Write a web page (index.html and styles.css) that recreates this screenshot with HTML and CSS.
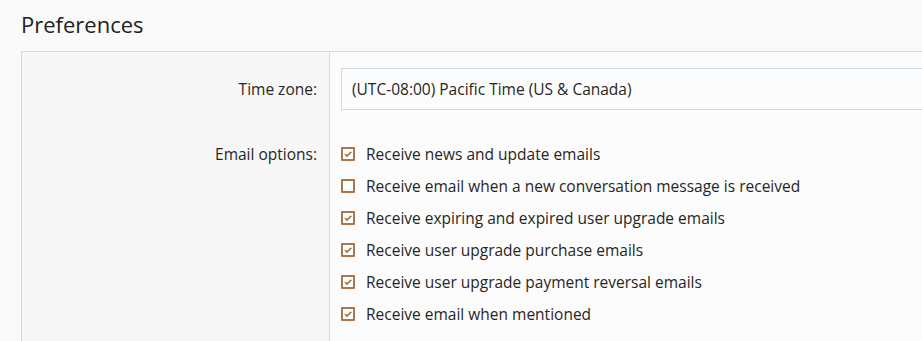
FILE: index.html
```html
<!DOCTYPE html>
<html lang="en">
<head>
    <meta charset="UTF-8">
    <title>Preferences</title>
    <link rel="stylesheet" href="styles.css">
</head>
<body>
    <h1 class="page-title">Preferences</h1>

    <div class="form-box">
        <div class="form-label form-label-input">Time zone:</div>
        <div class="form-field form-field-input">
            <div class="select-box">(UTC-08:00) Pacific Time (US &amp; Canada)</div>
        </div>

        <div class="form-label form-label-options">Email options:</div>
        <div class="form-field form-field-options">
            <label class="check-row">
                <span class="check-box"><svg viewBox="0 0 10 10"><path d="M2 5.1 L4.1 7.1 L8.2 2.9" /></svg></span>
                Receive news and update emails
            </label>
            <label class="check-row">
                <span class="check-box"></span>
                Receive email when a new conversation message is received
            </label>
            <label class="check-row">
                <span class="check-box"><svg viewBox="0 0 10 10"><path d="M2 5.1 L4.1 7.1 L8.2 2.9" /></svg></span>
                Receive expiring and expired user upgrade emails
            </label>
            <label class="check-row">
                <span class="check-box"><svg viewBox="0 0 10 10"><path d="M2 5.1 L4.1 7.1 L8.2 2.9" /></svg></span>
                Receive user upgrade purchase emails
            </label>
            <label class="check-row">
                <span class="check-box"><svg viewBox="0 0 10 10"><path d="M2 5.1 L4.1 7.1 L8.2 2.9" /></svg></span>
                Receive user upgrade payment reversal emails
            </label>
            <label class="check-row">
                <span class="check-box"><svg viewBox="0 0 10 10"><path d="M2 5.1 L4.1 7.1 L8.2 2.9" /></svg></span>
                Receive email when mentioned
            </label>
        </div>
    </div>
</body>
</html>
```

FILE: styles.css
```css
:root {
    --text-color: #262626;
    --border-color: #cddbe7;
    --check-color: #ab7748;
}

* {
    box-sizing: border-box;
    margin: 0;
    padding: 0;
}

body {
    font-family: 'Open Sans', 'Noto Sans', sans-serif;
    background-color: #fafafa;
    color: var(--text-color);
    padding: 9px 0 0 21px;
    overflow: hidden;
}

.page-title {
    font-size: 22px;
    font-weight: 400;
    line-height: 30px;
    margin-bottom: 12px;
    color: #222;
}

.form-box {
    display: grid;
    grid-template-columns: 308px 1fr;
    border: 1px solid var(--border-color);
    border-right: none;
    border-bottom: none;
}

.form-label {
    background-color: #f7f7f7;
    border-right: 1px solid var(--border-color);
    text-align: right;
    padding-right: 12px;
    font-size: 15.5px;
}

.form-field {
    background-color: #fcfcfc;
    padding-left: 11px;
}

.form-label-input {
    padding-top: 16px;
    line-height: 42px;
}

.form-field-input {
    padding-top: 16px;
}

.select-box {
    height: 42px;
    line-height: 40px;
    border: 1px solid var(--border-color);
    border-right: none;
    background-color: #fcfcfc;
    padding-left: 10px;
    font-size: 15.5px;
}

.form-label-options {
    padding-top: 28px;
    line-height: 32px;
}

.form-field-options {
    padding-top: 28px;
    padding-bottom: 20px;
}

.check-row {
    display: flex;
    align-items: center;
    gap: 11px;
    height: 32px;
    font-size: 15.5px;
}

.check-box {
    width: 14px;
    height: 14px;
    border: 2px solid var(--check-color);
    border-radius: 1px;
    flex-shrink: 0;
    display: flex;
    background-color: #fff;
}

.check-box svg {
    width: 100%;
    height: 100%;
    fill: none;
    stroke: var(--check-color);
    stroke-width: 1.8;
}
```
